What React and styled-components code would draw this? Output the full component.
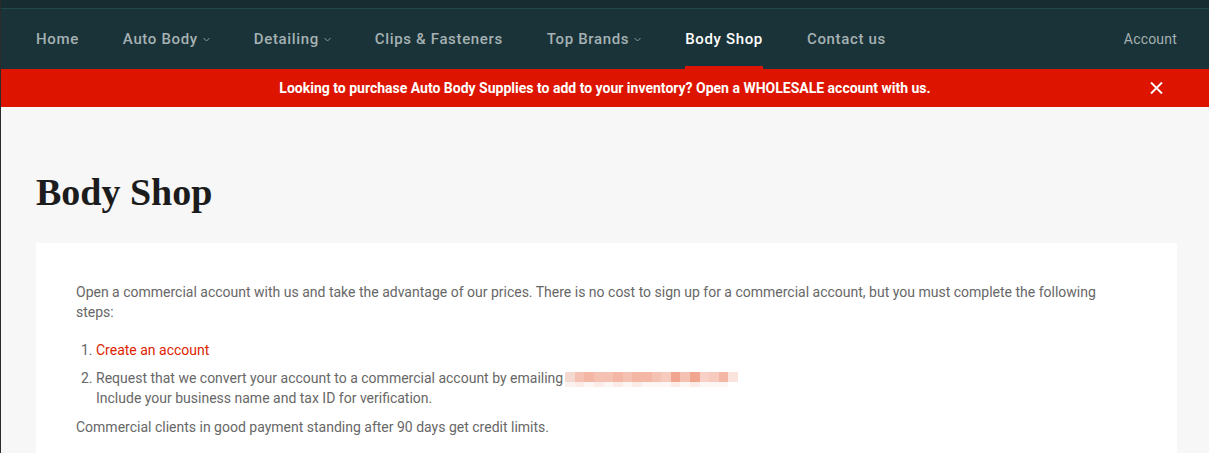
import React from "react";
import styled, { createGlobalStyle } from "styled-components";

const Global = createGlobalStyle`
  html, body { margin: 0; padding: 0; background: #f7f7f7; }
  body { font-family: Roboto, "Liberation Sans", Arial, sans-serif; }
  * { box-sizing: border-box; }
`;

const Page = styled.div`
  min-height: 453px;
  border-left: 1px solid #2b2b2b;
  background: #f7f7f7;
`;

const TopStrip = styled.div`
  height: 9px;
  background: #172c31;
  border-bottom: 1px solid #21474a;
`;

const Nav = styled.nav`
  height: 60px;
  background: #1a3338;
  display: flex;
  align-items: stretch;
  padding: 0 32px 0 13px;
`;

const NavList = styled.ul`
  display: flex;
  list-style: none;
  margin: 0;
  padding: 0;
  flex: 1;
`;

const NavItem = styled.li`
  position: relative;
  display: flex;
  align-items: center;
  padding: 0 22px;
  font-size: 15px;
  font-weight: 500;
  letter-spacing: 0.65px;
  color: ${(p) => (p.$active ? "#ffffff" : "#a5b1b3")};
  &::after {
    content: "";
    display: ${(p) => (p.$active ? "block" : "none")};
    position: absolute;
    left: 22px;
    right: 22px;
    bottom: 0;
    height: 3px;
    background: #dd1500;
  }
`;

const Chevron = styled.svg`
  margin-left: 5px;
  width: 7px;
  height: 5px;
`;

const Account = styled.div`
  display: flex;
  align-items: center;
  font-size: 14px;
  color: #a5b1b3;
  letter-spacing: 0.2px;
`;

const Banner = styled.div`
  position: relative;
  height: 38px;
  background: #dd1500;
  color: #ffffff;
  display: flex;
  align-items: center;
  justify-content: center;
  font-size: 14px;
  font-weight: 700;
`;

const Close = styled.button`
  position: absolute;
  right: 46px;
  top: 50%;
  transform: translateY(-50%);
  background: none;
  border: 0;
  padding: 0;
  display: flex;
  cursor: pointer;
`;

const Main = styled.main`
  padding: 62px 32px 0 35px;
`;

const Title = styled.h1`
  margin: 0 0 28px;
  font-family: "Liberation Serif", "Times New Roman", serif;
  font-weight: 700;
  font-size: 38px;
  line-height: 46px;
  color: #1c1c1c;
`;

const Card = styled.section`
  background: #ffffff;
  padding: 39px 60px 20px 40px;
  font-size: 14px;
  line-height: 20px;
  color: #676767;
`;

const Para = styled.p`
  margin: 0;
`;

const Steps = styled.ol`
  margin: 18px 0 9px;
  padding-left: 20px;
`;

const Step = styled.li`
  margin-bottom: 8px;
  &:last-child { margin-bottom: 0; }
`;

const Link = styled.a`
  color: #dd2200;
  text-decoration: none;
`;

const Blur = styled.span`
  display: inline-flex;
  vertical-align: middle;
  margin-left: 2px;
  height: 15px;
  line-height: 0;
`;

const Pixel = styled.span`
  width: 9.6px;
  height: 100%;
  display: flex;
  flex-direction: column;
`;

const PixelCell = styled.span`
  flex: ${(p) => (p.$top ? 2 : 1)};
`;

const blurTop = [
  "#f3d9d2", "#f5c1b2", "#f4b7a5", "#f5c1b2", "#f5c1b2", "#f4b7a5", "#f5c1b2",
  "#f4b7a5", "#f4b7a5", "#f5c1b2", "#f6cabd", "#f2a58e", "#f5c1b2", "#f2a58e",
  "#f7d1c6", "#f6cabd", "#f4b7a5", "#f9e3dc",
];
const blurBot = [
  "#fbf1ee", "#fbece7", "#fdf6f4", "#fbece7", "#fdf6f4", "#fbece7", "#fdf6f4",
  "#fbece7", "#fdf6f4", "#fdf6f4", "#fdf6f4", "#fbece7", "#fdf6f4", "#fbece7",
  "#fdf6f4", "#fdf6f4", "#fdf6f4", "#ffffff",
];

const ChevronIcon = () => (
  <Chevron viewBox="0 0 7 5" fill="none">
    <path d="M0.5 1 L3.5 4 L6.5 1" stroke="#8a9a9d" strokeWidth="1" />
  </Chevron>
);

const items = [
  { label: "Home" },
  { label: "Auto Body", menu: true },
  { label: "Detailing", menu: true },
  { label: "Clips & Fasteners" },
  { label: "Top Brands", menu: true },
  { label: "Body Shop", active: true },
  { label: "Contact us" },
];

export default function App() {
  return (
    <>
      <Global />
      <Page>
        <TopStrip />
        <Nav>
          <NavList>
            {items.map((it) => (
              <NavItem key={it.label} $active={it.active}>
                {it.label}
                {it.menu && <ChevronIcon />}
              </NavItem>
            ))}
          </NavList>
          <Account>Account</Account>
        </Nav>
        <Banner>
          Looking to purchase Auto Body Supplies to add to your inventory? Open a WHOLESALE account with us.
          <Close aria-label="Close">
            <svg width="13" height="13" viewBox="0 0 13 13">
              <path d="M1 1 L12 12 M12 1 L1 12" stroke="#fff" strokeWidth="1.8" />
            </svg>
          </Close>
        </Banner>
        <Main>
          <Title>Body Shop</Title>
          <Card>
            <Para>
              Open a commercial account with us and take the advantage of our prices. There is no cost to sign up for a commercial account, but you must complete the following steps:
            </Para>
            <Steps>
              <Step>
                <Link href="#">Create an account</Link>
              </Step>
              <Step>
                Request that we convert your account to a commercial account by emailing
                <Blur aria-hidden="true">
                  {blurTop.map((c, i) => (
                    <Pixel key={i}>
                      <PixelCell $top style={{ background: c }} />
                      <PixelCell style={{ background: blurBot[i] }} />
                    </Pixel>
                  ))}
                </Blur>
                <br />
                Include your business name and tax ID for verification.
              </Step>
            </Steps>
            <Para>Commercial clients in good payment standing after 90 days get credit limits.</Para>
          </Card>
        </Main>
      </Page>
    </>
  );
}
